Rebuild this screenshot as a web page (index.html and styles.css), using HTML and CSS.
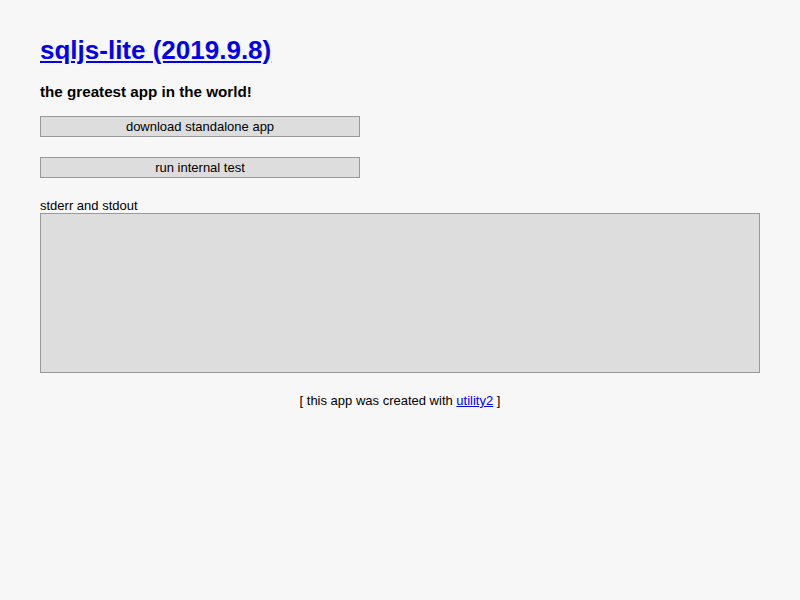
FILE: index.html
```html
<!DOCTYPE html>
<html>
<head>
<meta charset="utf-8">
<title>sqljs-lite (2019.9.8)</title>
<link rel="stylesheet" href="styles.css">
</head>
<body>
<div class="page">
  <h1 class="title"><a href="#">sqljs-lite (2019.9.8)</a></h1>
  <h3 class="subtitle">the greatest app in the world!</h3>
  <button class="btn">download standalone app</button>
  <button class="btn">run internal test</button>
  <label class="label">stderr and stdout</label>
  <textarea class="output" readonly></textarea>
  <div class="footer">[ this app was created with <a href="#">utility2</a> ]</div>
</div>
</body>
</html>
```
FILE: styles.css
```css
html, body {
  margin: 0;
  padding: 0;
  background: #f7f7f7;
}
body {
  font-family: "Liberation Sans", Arial, sans-serif;
  color: #000;
}
.page {
  padding: 0 40px;
  display: flex;
  flex-direction: column;
  align-items: flex-start;
}
.title {
  margin: 33px 0 0;
  font-size: 26px;
  line-height: 34px;
  font-weight: bold;
}
.title a {
  color: #00e;
}
.subtitle {
  margin: 16px 0 0;
  font-size: 15.2px;
  line-height: 18px;
  font-weight: bold;
}
.btn {
  width: 320px;
  height: 21px;
  margin: 15px 0 6px;
  padding: 0;
  background: #ddd;
  border: 1px solid #999;
  font-family: "Liberation Sans", Arial, sans-serif;
  font-size: 13px;
  color: #000;
}
.btn + .btn {
  margin-top: 14px;
}
.label {
  margin-top: 14px;
  font-size: 13px;
  line-height: 15px;
}
.output {
  box-sizing: border-box;
  width: 720px;
  height: 160px;
  margin: 0;
  background: #ddd;
  border: 1px solid #999;
  resize: none;
}
.footer {
  align-self: stretch;
  text-align: center;
  margin-top: 20px;
  font-size: 13px;
  line-height: 15px;
}
.footer a {
  color: #00e;
}
```
